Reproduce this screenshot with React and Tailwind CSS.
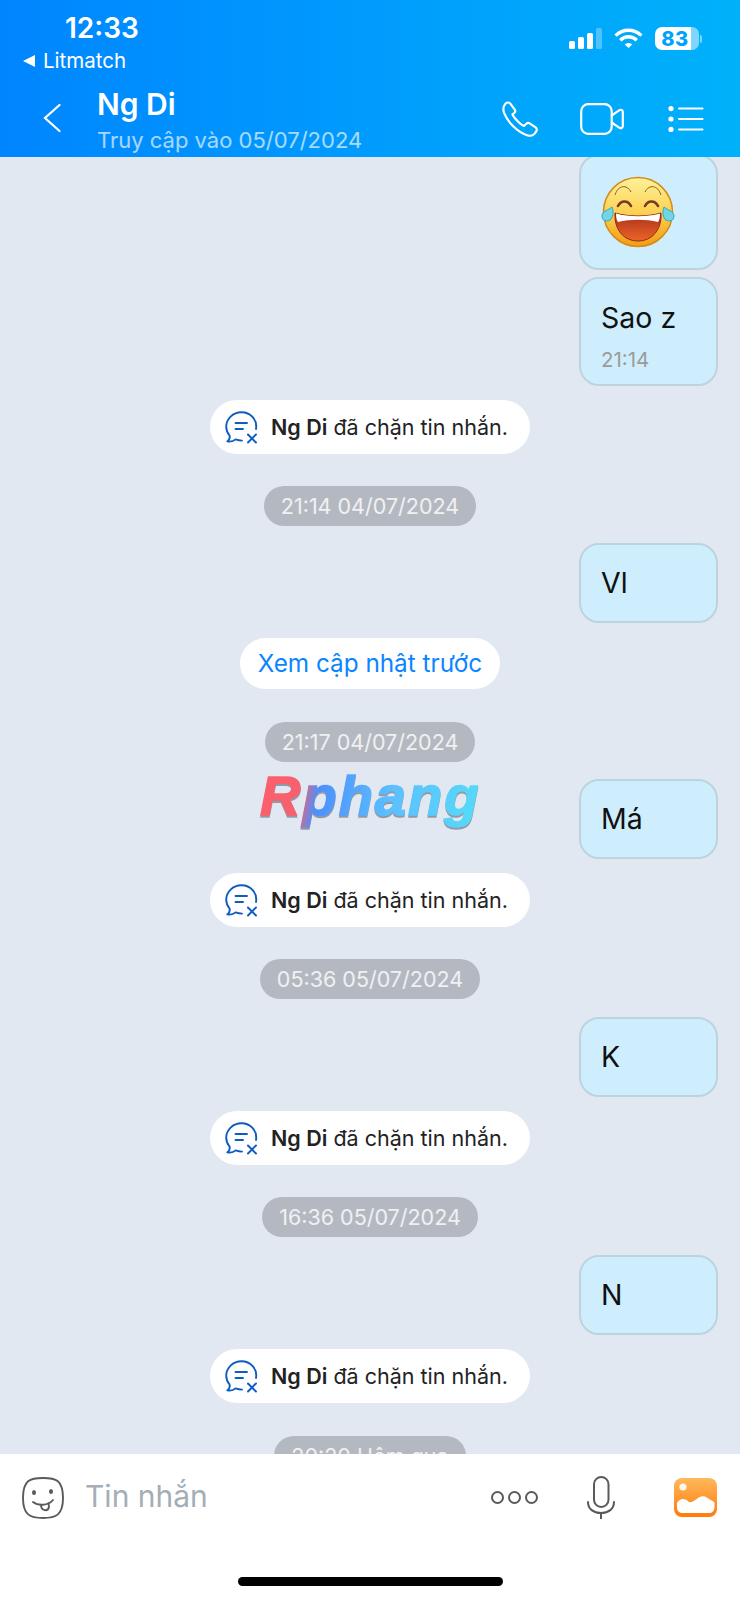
const sans = { fontFamily: 'Inter, "Noto Sans", sans-serif' }

function PhoneIcon() {
  return (
    <svg width="36" height="36" viewBox="0 0 36 36" fill="none" stroke="white" strokeWidth="2.2" strokeLinejoin="round">
      <path d="M3.5 2.6 C5 1.2 7 1.1 8.3 2.6 L12.6 8.4 C13.6 9.7 13.3 11 12.2 12 L10.5 13.4 C11.6 16.6 18.8 24 22 25 L24.3 22.8 C25.5 21.7 26.8 21.8 28 22.6 L33.6 26.4 C35 27.5 35.2 29.4 34 30.8 L32.6 32.6 C30.8 34.8 28 35.2 25 34.2 C15.5 31 6 21.5 2.2 12.2 C0.8 8.5 1.4 5 3.5 2.6 Z" />
    </svg>
  )
}

function VideoIcon() {
  return (
    <svg width="44" height="32" viewBox="0 0 44 32" fill="none" stroke="white" strokeWidth="2.2" strokeLinejoin="round">
      <rect x="1.2" y="1.2" width="30.5" height="29.6" rx="7" />
      <path d="M31.7 12.5 L39.5 7.2 C41 6.3 42.8 7.2 42.8 9 L42.8 23 C42.8 24.8 41 25.7 39.5 24.8 L31.7 19.5" />
    </svg>
  )
}

function ListIcon() {
  return (
    <svg width="36" height="26" viewBox="0 0 36 26" fill="white" stroke="none">
      <circle cx="3" cy="2.6" r="2.6" />
      <circle cx="3" cy="13" r="2.6" />
      <circle cx="3" cy="23.4" r="2.6" />
      <rect x="10" y="1.6" width="25.5" height="2" rx="1" />
      <rect x="10" y="12" width="25.5" height="2" rx="1" />
      <rect x="10" y="22.4" width="25.5" height="2" rx="1" />
    </svg>
  )
}

function SignalIcon() {
  return (
    <svg width="33" height="21" viewBox="0 0 33 21" fill="white">
      <rect x="0" y="13" width="6" height="8" rx="1.6" />
      <rect x="9" y="9" width="6" height="12" rx="1.6" />
      <rect x="18" y="5" width="6" height="16" rx="1.6" />
      <rect x="27" y="0" width="6" height="21" rx="1.6" fillOpacity="0.3" />
    </svg>
  )
}

function WifiIcon() {
  return (
    <svg width="29" height="21" viewBox="0 0 29 21" fill="none" stroke="white" strokeWidth="3.4">
      <path d="M1.6 7.6 C9 0.4 20 0.4 27.4 7.6" />
      <path d="M6.2 12.2 C11 7.6 18 7.6 22.8 12.2" />
      <path d="M10.8 16.4 L14.5 20 L18.2 16.4 C16 14.4 13 14.4 10.8 16.4 Z" fill="white" stroke="none" />
    </svg>
  )
}

function Battery() {
  return (
    <div className="flex items-center gap-[1px]">
      <div className="relative h-[23px] w-[44px] overflow-hidden rounded-[7px] bg-white/50">
        <div className="flex h-full w-[36px] items-center justify-center rounded-l-[7px] bg-white">
          <span className="pl-[4px] text-[20px] font-extrabold tracking-[0.5px] text-[#00a3fb]" style={sans}>83</span>
        </div>
      </div>
      <div className="h-[8px] w-[2px] rounded-r-full bg-white/50" />
    </div>
  )
}

function LaughEmoji() {
  return (
    <svg width="74" height="74" viewBox="0 0 74 74">
      <defs>
        <linearGradient id="face" x1="0" y1="0" x2="0" y2="1">
          <stop offset="0" stopColor="#fdf29a" />
          <stop offset="0.5" stopColor="#fcd253" />
          <stop offset="1" stopColor="#f19c12" />
        </linearGradient>
        <linearGradient id="mouth" x1="0" y1="0" x2="0" y2="1">
          <stop offset="0" stopColor="#a92f1c" />
          <stop offset="1" stopColor="#ec6527" />
        </linearGradient>
      </defs>
      <circle cx="37" cy="37" r="34.5" fill="url(#face)" stroke="#d98a14" strokeWidth="1.5" />
      <path d="M14 20 C17 10 26 9 30 17 M44 17 C48 9 57 10 60 20" fill="none" stroke="#8a5a22" strokeWidth="1" />
      <path d="M17 31 C20 25 27 25 30 31 M44 31 C47 25 54 25 57 31" fill="none" stroke="#7a3b1c" strokeWidth="2.6" strokeLinecap="round" />
      <path d="M14 38 C28 42 46 42 60 38 C61 56 50 66 37 66 C24 66 13 56 14 38 Z" fill="url(#mouth)" stroke="#8c2a18" strokeWidth="1" />
      <path d="M15 38.5 C28 42 46 42 59 38.5 C59 42 58.5 45 57 47 C45 44 29 44 17 47 C15.5 45 15 42 15 38.5 Z" fill="white" />
      <path d="M11 32 C8 35 1 36 1 41 C1 46 6 47 9 45 C12 43 13 37 11 32 Z" fill="#6fd6e8" stroke="#2fa6c4" strokeWidth="1" />
      <path d="M63 32 C66 35 73 36 73 41 C73 46 68 47 65 45 C62 43 61 37 63 32 Z" fill="#6fd6e8" stroke="#2fa6c4" strokeWidth="1" />
    </svg>
  )
}

function BlockedIcon() {
  return (
    <svg width="33" height="33" viewBox="0 0 33 33" fill="none" stroke="#0f5cc0" strokeWidth="1.9" strokeLinecap="round" strokeLinejoin="round">
      <path d="M31 18 C32.6 8.8 25.5 1.2 16.5 1.2 C7.8 1.2 1.2 8 1.2 15.8 C1.2 19.4 2.6 22.4 4.8 25 C4.8 27 4 29.4 2.4 30.4 C5.6 31 8.8 30 10.6 28.4 C12.8 29.2 14.8 29.6 17 29.6" />
      <path d="M10.5 12 L22 12" />
      <path d="M10.5 18 L18 18" />
      <path d="M23 23.5 L31 31.5" />
      <path d="M31 23.5 L23 31.5" />
    </svg>
  )
}

function SmileIcon() {
  return (
    <svg width="42" height="42" viewBox="0 0 42 42" fill="none" stroke="#5a5a5a" strokeWidth="1.9" strokeLinecap="round">
      <path d="M21 1 C34 1 41 3 41 21 C41 38 34 41 21 41 C8 41 1 38 1 21 C1 3 8 1 21 1 Z" />
      <ellipse cx="12" cy="15.5" rx="2" ry="2.6" fill="#5a5a5a" stroke="none" />
      <ellipse cx="29" cy="14.5" rx="2" ry="2.6" fill="#5a5a5a" stroke="none" />
      <path d="M11 25 C16 29 26 29 31 23" />
      <path d="M19 28 C19 34 26 35 27 30 L26.5 26.5" />
    </svg>
  )
}

function MicIcon() {
  return (
    <svg width="28" height="43" viewBox="0 0 28 43" fill="none" stroke="#5a5a5a" strokeWidth="2" strokeLinecap="round">
      <rect x="7" y="1" width="14.5" height="30" rx="7.25" />
      <path d="M1 26 C1 33 6.5 37 14 37 C21.5 37 27 33 27 26" />
      <path d="M14 37 L14 42.5" />
    </svg>
  )
}

function GalleryIcon() {
  return (
    <svg width="43" height="39" viewBox="0 0 43 39">
      <defs>
        <linearGradient id="gal" x1="0" y1="0" x2="0" y2="1">
          <stop offset="0" stopColor="#ffb95c" />
          <stop offset="1" stopColor="#ff7a0a" />
        </linearGradient>
      </defs>
      <rect width="43" height="39" rx="8" fill="url(#gal)" />
      <circle cx="9" cy="9" r="3.6" fill="white" fillOpacity="0.9" />
      <path d="M3 25 C6 20 11 20 15 24 C18 25 21 22 24 20 C28 17 32 18 35 21 C38 23 40 23 40.5 25 L40.5 29 C40.5 33 38 35 35 35 L9 35 C5 35 3 33 3 29 Z" fill="white" />
    </svg>
  )
}

function TimePill({ text, className }) {
  return (
    <div className={`flex h-[40px] shrink-0 items-center justify-center self-center rounded-full bg-[#b4b9c1] px-[17px] text-[21.5px] text-white/80 ${className}`}>
      {text}
    </div>
  )
}

function Blocked({ className }) {
  return (
    <div className={`flex h-[54px] w-[320px] shrink-0 items-center self-center rounded-full bg-white pl-[15px] text-[21.5px] text-[#222] ${className}`}>
      <BlockedIcon />
      <span className="ml-[13px] whitespace-nowrap">
        <b className="font-semibold">Ng Di</b> đã chặn tin nhắn.
      </span>
    </div>
  )
}

function Bubble({ children, className }) {
  return (
    <div className={`mr-[22px] w-[139px] shrink-0 self-end rounded-[20px] border-2 border-[#bdd4de] bg-[#cfeefd] pl-[20px] text-[28.5px] text-[#111] ${className}`}>
      {children}
    </div>
  )
}

export default function App() {
  return (
    <div className="flex h-[1600px] w-[740px] flex-col overflow-hidden bg-[#e2e8f1]" style={sans}>
      <header className="h-[157px] shrink-0 bg-gradient-to-r from-[#0085ff] to-[#00b1fa] text-white">
        <div className="flex h-[47px] items-end justify-between pl-[65px] pr-[38px]">
          <span className="text-[28px] font-semibold leading-[38px]">12:33</span>
          <div className="mb-[-3px] flex items-center gap-[12px]">
            <SignalIcon />
            <WifiIcon />
            <Battery />
          </div>
        </div>
        <div className="flex h-[28px] items-center pl-[23px] text-[20.5px]">
          <svg width="12" height="12" viewBox="0 0 12 12" fill="white"><path d="M0 6 L12 0 L12 12 Z" /></svg>
          <span className="ml-[8px]">Litmatch</span>
        </div>
        <div className="flex items-center pl-[43px] pr-[36px] pt-[12px]">
          <svg className="mb-[6px]" width="18" height="30" viewBox="0 0 18 30" fill="none" stroke="white" strokeWidth="2.2" strokeLinecap="round"><path d="M16.5 2 L2 15 L16.5 28" /></svg>
          <div className="ml-[36px] flex-1">
            <div className="text-[30px] font-semibold leading-[34px]">Ng Di</div>
            <div className="mt-[4px] text-[22px] leading-[30px] text-white/65">Truy cập vào 05/07/2024</div>
          </div>
          <div className="mb-[5px] flex items-center">
            <PhoneIcon />
            <div className="ml-[42px]"><VideoIcon /></div>
            <div className="ml-[44px]"><ListIcon /></div>
          </div>
        </div>
      </header>

      <main className="relative flex min-h-0 flex-1 flex-col overflow-hidden">
        <Bubble className="mt-[-3px] flex h-[116px] items-center pl-[20px]">
          <LaughEmoji />
        </Bubble>
        <Bubble className="mt-[7px] h-[109px] pt-[19px]">
          <div className="leading-[40px]">Sao z</div>
          <div className="mt-[10px] text-[20.5px] leading-[24px] text-[#9b9b9b]">21:14</div>
        </Bubble>
        <Blocked className="mt-[14px]" />
        <TimePill text="21:14 04/07/2024" className="mt-[32px]" />
        <Bubble className="mt-[17px] flex h-[80px] items-center">Vl</Bubble>
        <div className="mt-[15px] flex h-[51px] shrink-0 items-center self-center rounded-full bg-white px-[18px] text-[24.3px] text-[#0a85ff]">
          Xem cập nhật trước
        </div>
        <TimePill text="21:17 04/07/2024" className="mt-[33px]" />
        <Bubble className="mt-[17px] flex h-[80px] items-center">Má</Bubble>
        <Blocked className="mt-[14px]" />
        <TimePill text="05:36 05/07/2024" className="mt-[32px]" />
        <Bubble className="mt-[18px] flex h-[80px] items-center">K</Bubble>
        <Blocked className="mt-[14px]" />
        <TimePill text="16:36 05/07/2024" className="mt-[32px]" />
        <Bubble className="mt-[18px] flex h-[80px] items-center">N</Bubble>
        <Blocked className="mt-[14px]" />
        <TimePill text="20:20 Hôm qua" className="mt-[33px]" />

        {/* watermark over the chat */}
        <div
          className="absolute left-[260px] top-[604px] bg-[linear-gradient(100deg,#ff5f6b_0%,#f7606f_20%,#4d8ffc_27%,#5cc0ff_60%,#55dcf8_100%)] bg-clip-text text-[56px] font-bold italic leading-[70px] tracking-[2px] text-transparent drop-shadow-[0_2px_0_rgba(110,120,135,0.7)] [-webkit-text-stroke:1.5px_transparent]"
          style={{ fontFamily: '"Liberation Sans", sans-serif' }}
        >
          Rphang
        </div>
      </main>

      <footer className="relative h-[146px] shrink-0 bg-white">
        <div className="flex items-center pl-[22px] pr-[23px] pt-[22px]">
          <SmileIcon />
          <span className="ml-[21px] mt-[-3px] flex-1 text-[30px] leading-[42px] text-[#a3aeb7]">Tin nhắn</span>
          <div className="flex gap-[4px]">
            <span className="h-[13px] w-[13px] rounded-full border-2 border-[#5a5a5a]" />
            <span className="h-[13px] w-[13px] rounded-full border-2 border-[#5a5a5a]" />
            <span className="h-[13px] w-[13px] rounded-full border-2 border-[#5a5a5a]" />
          </div>
          <div className="ml-[49px]"><MicIcon /></div>
          <div className="ml-[59px]"><GalleryIcon /></div>
        </div>
        <div className="absolute bottom-[14px] left-[238px] h-[9px] w-[265px] rounded-full bg-black" />
      </footer>
    </div>
  )
}
